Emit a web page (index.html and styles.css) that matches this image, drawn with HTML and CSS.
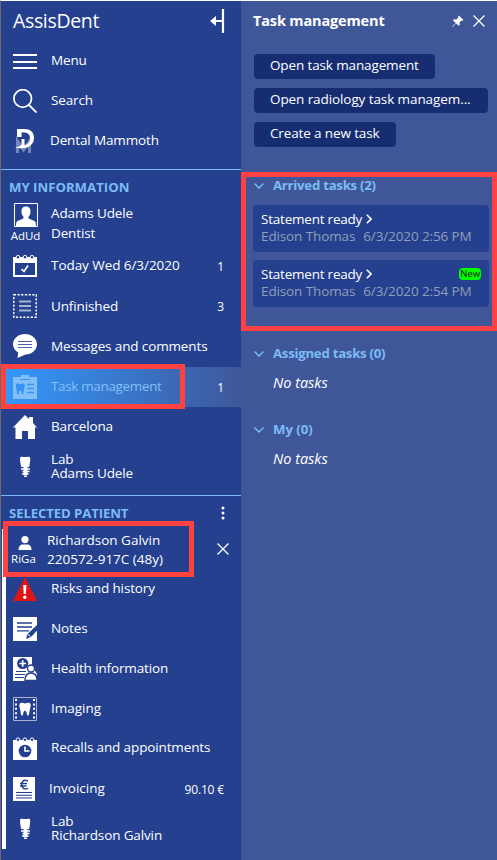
FILE: index.html
```html
<!DOCTYPE html>
<html lang="en">
<head>
<meta charset="utf-8">
<title>AssisDent</title>
<link rel="stylesheet" href="styles.css">
</head>
<body>
<svg class="defs" width="0" height="0">
  <symbol id="implant" viewBox="0 0 24 24">
    <path fill="#fff" d="M7.200 2.200C9 1.200 10.500 2 12 2S15.500 1.200 17 2.200C17.600 5 16.800 8 16.200 12H8.200C7.400 8 6.800 5 7.200 2.200Z"/>
    <path stroke="#fff" stroke-width="1.600" d="M8 14h9M9.500 16.500h7M9 19h6.500M11 21.200h3"/>
    <path stroke="#fff" stroke-width="4" d="M12.500 12v8"/>
  </symbol>
  <symbol id="tooth" viewBox="0 0 12 12" preserveAspectRatio="none">
    <path d="M.5 2C1.500-.3 4 .8 6 1.200 8 .8 10.500-.3 11.500 2 12 4 10.900 5.500 10.600 7.500 10.300 9.500 10 11.500 8.800 11.800 7.500 11.600 8.200 7.500 6 7.500S4.500 11.600 3.200 11.800C2 11.500 1.700 9.500 1.400 7.500 1.100 5.500 0 4 .5 2Z"/>
  </symbol>
</svg>
<div class="app">
  <nav class="sidebar">
    <header class="brand"><span>AssisDent</span>
      <svg width="15" height="24" viewBox="0 0 15 24"><path d="M13 0v24" stroke="#fff" stroke-width="2.200"/><path d="M13 12H5" stroke="#fff" stroke-width="2"/><path d="M0 12l6-5v10z" fill="#fff"/></svg>
    </header>
    <div class="row"><svg class="icon" viewBox="0 0 24 24"><path d="M0 6h24M0 13h24M0 19h24" stroke="#fff" stroke-width="2"/></svg><span class="label">Menu</span></div>
    <div class="row"><svg class="icon" viewBox="0 0 24 24" fill="none" stroke="#fff" stroke-width="1.800"><circle cx="9.700" cy="9.500" r="8.800"/><path d="M16 16l7.500 7.500"/></svg><span class="label">Search</span></div>
    <div class="row"><svg class="icon" viewBox="0 0 24 24"><path d="M4.500 24V12l6 9 6-9v12" fill="none" stroke="#7386b8" stroke-width="3"/><path fill="#fff" fill-rule="evenodd" d="M4 0h7c6.500 0 10 3.200 10 8.800 0 6.400-4.500 10.400-12 10.400-3 0-5-.2-7-.7C5 18.100 7 17.300 8.500 15.800V10h3v6c3.500-.3 5.500-2.700 5.500-6.500 0-4-2.200-6-6-6H8.500v4.500H4z"/></svg><span class="label dental">Dental Mammoth</span></div>

    <section class="group">
      <h2 class="group-title mine">MY INFORMATION</h2>
      <div class="row user">
        <div class="avatar"><svg width="24" height="24" viewBox="0 0 24 24"><path d="M.5.5h23v23H.5z" fill="none" stroke="#fff"/><path fill="#fff" d="M12 3.500c3.200 0 4.700 2.200 4.500 5.500-.1 2-.8 3.500-1.900 4.500v2l5.900 2.500c1.300.7 1.500 2.500 1.500 5H2c0-2.500.2-4.300 1.500-5l5.900-2.500v-2C8.300 12.500 7.600 11 7.500 9 7.300 5.700 8.800 3.500 12 3.500z"/></svg><span>AdUd</span></div>
        <div class="label two">Adams Udele<br>Dentist</div>
      </div>
      <div class="row"><svg class="icon" viewBox="0 0 24 24"><path fill="#fff" fill-rule="evenodd" d="M0 3h24v20H0zM2 9v12h20V9z"/><g fill="#24408e" stroke="#fff"><circle cx="5" cy="3.200" r="1.800"/><circle cx="12" cy="3.200" r="1.800"/><circle cx="19" cy="3.200" r="1.800"/></g><path d="M8.500 15l2.500 2.500 4-6" fill="none" stroke="#fff" stroke-width="1.700"/></svg><span class="label today">Today Wed 6/3/2020</span><span class="count">1</span></div>
      <div class="row"><svg class="icon" viewBox="0 0 24 24" fill="none"><rect x=".8" y=".8" width="22.400" height="22.400" stroke="#fff" stroke-width="1.400" stroke-dasharray="2.200 1.500"/><path d="M6 7.500h12M6 12h12M6 16.500h12" stroke="#a7b3d2" stroke-width="1.800"/></svg><span class="label lower">Unfinished</span><span class="count">3</span></div>
      <div class="row tall"><svg class="icon" viewBox="0 0 24 24"><path fill="#fff" d="M12 0c6.600 0 12 4.500 12 10.300S18.600 20.500 12.500 20.500L4.500 24l.7-5.500C2 16.700 0 13.800 0 10.300 0 4.500 5.400 0 12 0z"/><path d="M5 7.500h14M5 10.500h14M5 13.500h14" stroke="#4a61a1" stroke-width="1.200"/></svg><span class="label lower">Messages and comments</span></div>
      <div class="row active"><svg class="icon" viewBox="0 0 24 24"><path fill="#83bff7" d="M0 2h8V0h8v2h8v22H0z"/><path stroke="#3693f5" d="M7 4.500h10"/><use href="#tooth" x="2.500" y="8" width="9.500" height="12" fill="#3693f5"/><path d="M14 9.500h7M14 13.500h7M14 17.500h7" stroke="#3693f5" stroke-width="1.300"/></svg><span class="label">Task management</span><span class="count">1</span></div>
      <div class="row"><svg class="icon" viewBox="0 0 24 24"><path fill="#fff" d="M12 0l4 4V2h4v6l4 4.500h-2V24h-7v-8H9v8H2.500V12.500H0z"/></svg><span class="label">Barcelona</span></div>
      <div class="row"><svg class="icon" viewBox="0 0 24 24"><use href="#implant"/></svg><div class="label tight">Lab<br>Adams Udele</div></div>
    </section>

    <section class="group patient-group">
      <div class="title-row"><h2 class="group-title">SELECTED PATIENT</h2><svg width="4" height="14" viewBox="0 0 4 14" fill="#fff"><circle cx="2" cy="2" r="1.500"/><circle cx="2" cy="7" r="1.500"/><circle cx="2" cy="12" r="1.500"/></svg></div>
      <div class="patient">
        <div class="row person">
          <div class="avatar"><svg width="14" height="14" viewBox="0 0 14 14" fill="#fff"><circle cx="7" cy="3.600" r="3.600"/><path d="M.5 14c0-3 1.500-5.500 4-5.500h5c2.500 0 4 2.500 4 5.500z"/></svg><span>RiGa</span></div>
          <div class="label two">Richardson Galvin<br>220572-917C (48y)</div>
          <svg class="dismiss" width="12" height="12" viewBox="0 0 12 12"><path d="M.5.5l11 11M11.500.5l-11 11" stroke="#fff" stroke-width="1.300"/></svg>
        </div>
        <div class="row"><svg class="icon" viewBox="0 0 24 24"><path fill="#e01517" d="M12 0l12 24H0z"/><path d="M10.200 8h3.200l-.5 9h-2.200z" fill="#fff"/><circle cx="11.800" cy="20.300" r="1.700" fill="#fff"/></svg><span class="label">Risks and history</span></div>
        <div class="row"><svg class="icon" viewBox="0 0 24 24"><path fill="#fff" d="M0 0h24v24H0z"/><path stroke="#24408e" d="M4 6h15M4 10h15M4 13.800h12" stroke-width="1.300"/><path d="M24 8v5.500L18 20l-5 2 1.500-5z" fill="#24408e"/><path d="M14.500 17l3 2.500" stroke="#fff"/></svg><span class="label">Notes</span></div>
        <div class="row"><svg class="icon" viewBox="0 0 24 24"><path fill="#fff" d="M0 0h19v9l5 8v7H0z"/><circle cx="9.700" cy="6.500" r="5.600" fill="#24408e"/><path d="M6.500 6.500h6.500M9.700 3.300v6.500" stroke="#fff" stroke-width="1.700"/><path d="M3 14.500h10M2 17.500h10M2 20.500h9" stroke="#24408e"/><g fill="#fff" stroke="#24408e" stroke-width="1.400"><circle cx="18" cy="11.500" r="3.500"/><path d="M12 23.500c0-5 2-7.500 6-7.500s6 2.500 6 7.500z"/></g></svg><span class="label">Health information</span></div>
        <div class="row"><svg class="icon" viewBox="0 0 24 24" fill="none"><path d="M.5.500h23v23H.5z" stroke="#a7b3d2"/><path d="M3 2v20M21 2v20" stroke="#fff" stroke-width="2" stroke-dasharray="2 2.400"/><use href="#tooth" x="6" y="5" width="12" height="14" fill="#fff"/></svg><span class="label imaging">Imaging</span></div>
        <div class="row"><svg class="icon" viewBox="0 0 24 24"><path fill="#fff" d="M0 3h24v20H0z"/><g fill="#24408e" stroke="#fff"><circle cx="5" cy="2.700" r="1.800"/><circle cx="12" cy="2.700" r="1.800"/><circle cx="19" cy="2.700" r="1.800"/></g><circle cx="12" cy="14" r="6.300" fill="#24408e"/><path d="M12 9.500V14h4.500" fill="none" stroke="#fff" stroke-width="1.600"/></svg><span class="label higher">Recalls and appointments</span></div>
        <div class="row"><svg class="icon" viewBox="0 0 24 24"><path fill="#fff" d="M0 0h22v24H0z"/><path d="M15 4C10.500 2 8.700 4.500 8.700 7.500S10.500 13 15 11.300M7 6.500h7M7 9h6.500" fill="none" stroke="#24408e" stroke-width="1.400"/><path d="M3 15.500h16M3 18.200h16M3 21h16" stroke="#24408e" stroke-width="1.100"/></svg><span class="label invoicing">Invoicing</span><span class="count">90.10 €</span></div>
        <div class="row"><svg class="icon" viewBox="0 0 24 24"><use href="#implant"/></svg><div class="label tight">Lab<br>Richardson Galvin</div></div>
      </div>
    </section>
  </nav>

  <main class="panel">
    <header class="panel-head"><h1>Task management</h1>
      <svg width="12" height="12" viewBox="0 0 12 12" fill="#fff"><path d="M7 .5L11.500 5l-1.200.8-.8-.2-2 2 .2 2.200-1 1L4 8.300 1 11.500 0 12l.6-1L3.700 8 1 5.300l1-1 2.300.2 2-2-.2-1z"/></svg>
      <svg class="close" width="12" height="12" viewBox="0 0 12 12"><path d="M.5.5l11 11M11.500.5l-11 11" stroke="#fff" stroke-width="1.300"/></svg>
    </header>
    <div class="actions">
      <button>Open task management</button>
      <button class="wide">Open radiology task managem...</button>
      <button class="short">Create a new task</button>
    </div>
    <section class="tasks arrived">
      <h3><svg width="10" height="6" viewBox="0 0 10 6"><path d="M.5.5L5 5 9.500.5"/></svg>Arrived tasks (2)</h3>
      <article><div class="task-title">Statement ready <svg width="6" height="10" viewBox="0 0 6 10"><path d="M.8.8L5 5 .8 9.200"/></svg></div><div class="meta"><span>Edison Thomas</span><span>6/3/2020 2:56 PM</span></div></article>
      <article><div class="task-title">Statement ready <svg width="6" height="10" viewBox="0 0 6 10"><path d="M.8.8L5 5 .8 9.200"/></svg><span class="new">New</span></div><div class="meta"><span>Edison Thomas</span><span>6/3/2020 2:54 PM</span></div></article>
    </section>
    <section class="tasks">
      <h3><svg width="10" height="6" viewBox="0 0 10 6"><path d="M.5.5L5 5 9.500.5"/></svg>Assigned tasks (0)</h3>
      <p>No tasks</p>
    </section>
    <section class="tasks">
      <h3 class="my"><svg width="10" height="6" viewBox="0 0 10 6"><path d="M.5.5L5 5 9.500.5"/></svg>My (0)</h3>
      <p>No tasks</p>
    </section>
  </main>
  <div class="mark mark-nav"></div>
  <div class="mark mark-patient"></div>
  <div class="mark mark-tasks"></div>
</div>
</body>
</html>
```
FILE: styles.css
```css
* { box-sizing: border-box; }
body { margin: 0; font-family: "Open Sans", "Noto Sans", sans-serif; font-size: 13.5px; color: #fff; }
h1, h2, h3, p { margin: 0; }
svg { display: block; flex: none; }
.defs { position: absolute; }
.app { position: relative; width: 497px; height: 860px; display: flex; border-top: 1px solid #fff; border-left: 1px solid #6b6b6b; overflow: hidden; }
.sidebar { width: 240px; background: #24408e; }
.brand { height: 40px; display: flex; align-items: center; justify-content: space-between; padding: 0 16px 2px 12px; font-size: 19.5px; letter-spacing: -.35px; }
.brand svg { margin-top: 2px; }
.row { height: 40px; display: flex; align-items: center; padding: 0 17px 0 12px; white-space: nowrap; }
.row.tall { height: 41px; padding-bottom: 1px; }
.icon { width: 24px; height: 24px; }
.label { margin-left: 14px; line-height: 20px; position: relative; top: -1px; letter-spacing: -.13px; }
.label.dental { margin-left: 13px; }
.label.today { letter-spacing: -.06px; }
.label.imaging { letter-spacing: 0; }
.label.lower { top: 0; }
.label.higher { top: -2px; }
.label.tight { line-height: 14px; top: -1px; }
.label.invoicing { margin-left: 12px; letter-spacing: 0; }
.count { margin-left: auto; font-size: 12px; letter-spacing: -.15px; }
.row + .group { margin-top: 8px; }
.group { border-top: 1px solid #7cb9f5; }
.group-title { height: 33px; line-height: 34px; padding-left: 8px; font-size: 13.2px; font-weight: 700; letter-spacing: -.12px; color: #7cbcf6; }
.group-title.mine { letter-spacing: 0; }
.user { height: 43px; align-items: flex-start; }
.avatar { width: 24px; display: flex; flex-direction: column; align-items: center; font-size: 11.5px; line-height: 18px; }
.user .avatar { margin-left: 1px; }
.user .avatar span { margin-left: -1px; }
.user .label { top: 0; margin-left: 13px; }
.active { background: linear-gradient(90deg, #3399ff, #3f5799); }
.active .label { color: #83bff7; letter-spacing: -.35px; }
.patient-group { margin-top: 8px; }
.title-row { display: flex; align-items: center; justify-content: space-between; padding-right: 16px; }
.patient { margin-left: 1px; border-left: 4px solid #fff; }
.patient .row { padding-left: 7px; }
.person .label { margin-left: 10px; line-height: 19px; top: 1px; letter-spacing: 0; }
.person .avatar { padding-top: 6px; }
.person .avatar span { margin-left: -3px; }
.dismiss { margin-left: auto; margin-right: -5px; }
.panel { width: 256px; background: #3f5799; padding: 0 8px 0 12px; }
.panel-head { height: 40px; display: flex; align-items: center; }
.panel-head h1 { font-size: 14.5px; font-weight: 700; flex: 1; letter-spacing: -.15px; padding-bottom: 1px; }
.close { margin-left: 9px; margin-right: 4px; }
.actions { display: flex; flex-direction: column; align-items: flex-start; gap: 9px; padding: 13px 0 0 1px; }
button { width: 181px; height: 25px; padding: 0 0 3px 16px; border: 0; border-radius: 4px; background: #162d71; color: #fff; font: inherit; letter-spacing: -.13px; text-align: left; white-space: nowrap; }
button.wide { width: 234px; letter-spacing: -.09px; }
button.short { width: 142px; }
.tasks h3 { display: flex; align-items: center; gap: 9px; height: 24px; font-size: 13.2px; font-weight: 700; letter-spacing: -.25px; color: #7cbcf6; }
.tasks h3.my { letter-spacing: 0; }
.tasks path { fill: none; stroke: #7cbcf6; stroke-width: 1.400; }
.tasks { height: 76px; }
.tasks h3 svg { margin: 1px 0 0 1px; }
.tasks.arrived { margin-top: 26px; height: 168px; }
.tasks p { padding-left: 20px; line-height: 35px; font-style: italic; font-size: 14.5px; }
article { height: 47px; margin: 0 0 8px; padding: 4px 8px; border-radius: 4px; background: #24408e; }
h3 + article { margin-top: 8px; }
.task-title { display: flex; align-items: center; gap: 4px; height: 19px; letter-spacing: -.22px; }
.task-title path { stroke: #fff; stroke-width: 1.6; }
.meta { display: flex; gap: 8px; height: 17px; line-height: 17px; letter-spacing: -.12px; color: #919fb7; white-space: nowrap; }
.new { margin-left: auto; height: 12px; line-height: 12px; padding: 0 1px; border-radius: 4px; background: #00ff00; color: #111; font-size: 9.5px; letter-spacing: 0; }
.mark { position: absolute; border: 5px solid #ff4141; }
.mark-nav { left: 0; top: 363px; width: 184px; height: 45px; }
.mark-patient { left: 2px; top: 520px; width: 191px; height: 56px; }
.mark-tasks { left: 240px; top: 171px; width: 256px; height: 159px; }
```
